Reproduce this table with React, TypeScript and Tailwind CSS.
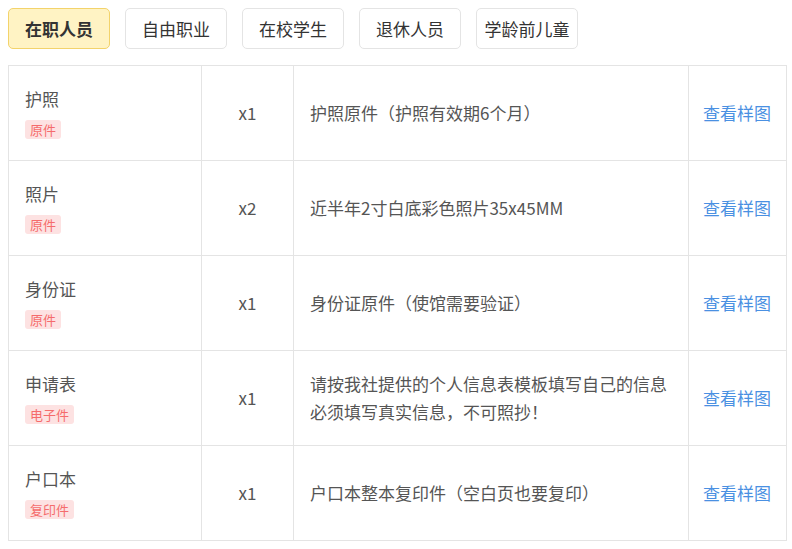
import React, { useState } from "react";

const tabs = ["在职人员", "自由职业", "在校学生", "退休人员", "学龄前儿童"];

const rows = [
  { name: "护照", tag: "原件", count: "x1", desc: ["护照原件（护照有效期6个月）"] },
  { name: "照片", tag: "原件", count: "x2", desc: ["近半年2寸白底彩色照片35x45MM"] },
  { name: "身份证", tag: "原件", count: "x1", desc: ["身份证原件（使馆需要验证）"] },
  {
    name: "申请表",
    tag: "电子件",
    count: "x1",
    desc: ["请按我社提供的个人信息表模板填写自己的信息", "必须填写真实信息，不可照抄！"],
  },
  { name: "户口本", tag: "复印件", count: "x1", desc: ["户口本整本复印件（空白页也要复印）"] },
];

export default function App() {
  const [active, setActive] = useState(0);

  return (
    <div
      className="w-[792px] h-[549px] bg-white p-2 text-[#555]"
      style={{ fontFamily: '"Noto Sans CJK SC", "Noto Sans", sans-serif' }}
    >
      {/* Tabs */}
      <div className="flex gap-[15px]">
        {tabs.map((t, i) => (
          <button
            key={t}
            onClick={() => setActive(i)}
            className={
              i === active
                ? "h-[41px] w-[102px] flex items-center justify-center rounded-[5px] border border-[#f3d36b] bg-[#fff3c4] text-[17px] font-bold text-[#333]"
                : "h-[41px] w-[102px] flex items-center justify-center rounded-[5px] border border-[#e4e4e4] bg-white text-[17px] text-[#333]"
            }
          >
            {t}
          </button>
        ))}
      </div>

      {/* Materials table */}
      <table className="mt-4 w-[778px] border-collapse table-fixed">
        <colgroup>
          <col className="w-[193px]" />
          <col className="w-[92px]" />
          <col className="w-[395px]" />
          <col className="w-[98px]" />
        </colgroup>
        <tbody>
          {rows.map((r) => (
            <tr key={r.name} className="h-[95px]">
              <td className="border border-[#e4e4e4] px-4 align-middle">
                <div className="text-[17px] leading-6 text-[#555]">{r.name}</div>
                <span className="mt-[9px] inline-block rounded-[3px] bg-[#fde2e2] px-[5px] text-[13px] leading-[19px] text-[#f56c6c]">
                  {r.tag}
                </span>
              </td>
              <td className="border border-[#e4e4e4] text-center text-[17px] text-[#555]">
                {r.count}
              </td>
              <td className="border border-[#e4e4e4] px-4 text-[17px] leading-[28px] text-[#555]">
                {r.desc.map((d) => (
                  <div key={d}>{d}</div>
                ))}
              </td>
              <td className="border border-[#e4e4e4] px-[14px] text-[17px] text-[#4a90e2]">
                查看样图
              </td>
            </tr>
          ))}
        </tbody>
      </table>
    </div>
  );
}
